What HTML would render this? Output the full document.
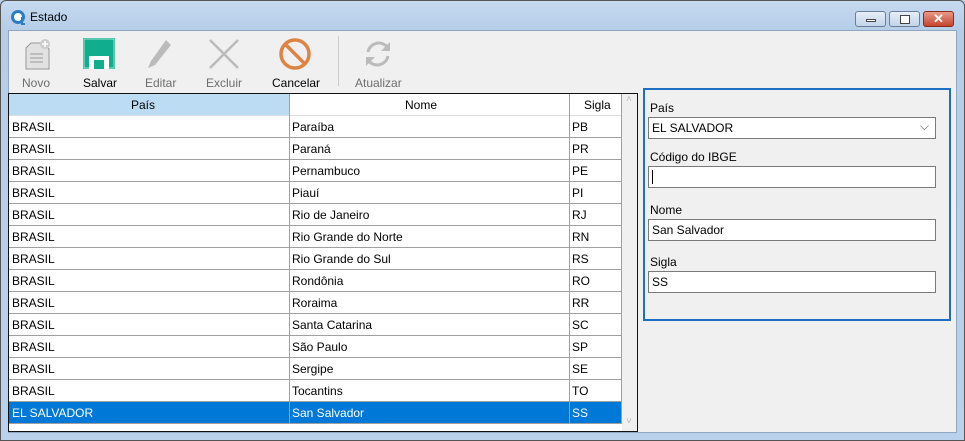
<!DOCTYPE html>
<html><head><meta charset="utf-8"><style>
*{box-sizing:border-box;margin:0;padding:0}
body{width:965px;height:441px;overflow:hidden;font-family:"Segoe UI","Liberation Sans",sans-serif;font-size:12px;background:#b9d1ea;position:relative}
.win{position:absolute;left:0;top:0;width:965px;height:441px;border:1px solid #555;border-radius:6px 6px 0 0;background:linear-gradient(#c6daf0,#b5cde8 30px,#b9d1ea)}
.client{position:absolute;left:8px;top:30px;width:949px;height:403px;background:#f0f0f0;border:1px solid #8ea6c2}
.abs{position:absolute}
.tb{position:absolute;top:76px;font-size:12px;text-align:center}
.grid{position:absolute;left:8px;top:93px;width:630px;height:339px;border:1px solid #111;background:#fff;overflow:hidden}
.row{position:absolute;left:0;height:22px;width:612px;border-bottom:1px solid #a0a0a0}
.row span{position:absolute;top:4px;white-space:nowrap}
.c1{left:3px}.c2{left:283px}.c3{left:563px}
.vl{position:absolute;top:0;width:1px;height:100%;background:#a0a0a0}
.sel{background:#0078d7;color:#fff}
.panel{position:absolute;left:643px;top:88px;width:308px;height:233px;border:2px solid #1e6fc2}
.lbl{position:absolute;left:5px;font-size:12px}
.inp{position:absolute;left:3px;width:288px;height:22px;border:1px solid #7a7a7a;background:#fff;padding:3px 3px;font-size:12px}
.btn{position:absolute;top:11px;height:16px;border:1px solid #6b7e99;border-radius:3px;background:linear-gradient(#e6eef8,#c3d4ea)}
</style></head><body>
<div class="win"></div>
<svg class="abs" style="left:10px;top:9px" width="16" height="16"><circle cx="8" cy="8" r="7" fill="#2a7cc8"/><circle cx="8" cy="8" r="4" fill="#fff"/><path d="M12 8v7h3" stroke="#2a7cc8" stroke-width="2" fill="none"/></svg>
<div class="abs" style="left:30px;top:10px;font-size:12px">Estado</div>
<div class="btn" style="left:855px;width:31px"><div class="abs" style="left:10px;top:7px;width:10px;height:3px;background:#fff;border:1px solid #444"></div></div>
<div class="btn" style="left:889px;width:31px"><div class="abs" style="left:10px;top:3px;width:10px;height:9px;border:1px solid #444;background:#fff"></div></div>
<div class="btn" style="left:923px;width:31px;background:linear-gradient(#e89a8a,#c4442e);border-color:#8a2a1c"><div class="abs" style="left:9px;top:-1px;color:#fff;font-weight:bold;font-size:13px">✕</div></div>
<div class="client"></div>
<!-- toolbar -->
<svg class="abs" style="left:24px;top:38px" width="28" height="32"><path d="M7 5h12l6 6v20H2V10z" fill="#e2e2e2" stroke="#999"/><path d="M6 16h13M6 20h13M6 24h13" stroke="#999"/><circle cx="21" cy="6" r="5" fill="#ccc"/><path d="M21 3v6M18 6h6" stroke="#fff" stroke-width="1.6"/></svg>
<div class="tb" style="left:22px;color:#6d6d6d">Novo</div>
<svg class="abs" style="left:83px;top:38px" width="32" height="31"><rect x="0" y="0" width="32" height="31" fill="#10ae8d"/><rect x="1" y="1" width="30" height="29" fill="none" stroke="#9fe0d0"/><rect x="6" y="18" width="20" height="13" fill="#fff"/><rect x="11" y="22" width="10" height="9" fill="#10ae8d"/></svg>
<div class="tb" style="left:83px">Salvar</div>
<svg class="abs" style="left:146px;top:38px" width="28" height="32"><path d="M20 2l5 5L9 27l-7 3 3-7z" fill="#bbb"/></svg>
<div class="tb" style="left:145px;color:#6d6d6d">Editar</div>
<svg class="abs" style="left:208px;top:38px" width="32" height="32"><path d="M2 2l28 28M30 2L2 30" stroke="#bbb" stroke-width="2.5"/></svg>
<div class="tb" style="left:206px;color:#6d6d6d">Excluir</div>
<svg class="abs" style="left:278px;top:37px" width="34" height="34"><circle cx="17" cy="17" r="14" fill="none" stroke="#dd8445" stroke-width="3.5"/><path d="M7 7l20 20" stroke="#dd8445" stroke-width="3.5"/></svg>
<div class="tb" style="left:272px">Cancelar</div>
<div class="abs" style="left:338px;top:36px;width:1px;height:50px;background:#ccc"></div>
<svg class="abs" style="left:362px;top:38px" width="32" height="32"><path d="M6 14A11 11 0 0 1 26 10" fill="none" stroke="#bbb" stroke-width="3"/><path d="M26 18A11 11 0 0 1 6 22" fill="none" stroke="#bbb" stroke-width="3"/><path d="M28 4v9h-9z" fill="#bbb"/><path d="M4 28v-9h9z" fill="#bbb"/></svg>
<div class="tb" style="left:355px;color:#6d6d6d">Atualizar</div>
<!-- grid -->
<div class="grid">
<div class="abs" style="left:0;top:0;width:281px;height:22px;background:#bcdcf4"></div>
<div class="row" style="top:0;border-color:#ddd"><span style="left:122px">País</span><span style="left:396px">Nome</span><span style="left:575px">Sigla</span></div>
<div class="row" style="top:22px"><span class="c1">BRASIL</span><span class="c2">Paraíba</span><span class="c3">PB</span></div>
<div class="row" style="top:44px"><span class="c1">BRASIL</span><span class="c2">Paraná</span><span class="c3">PR</span></div>
<div class="row" style="top:66px"><span class="c1">BRASIL</span><span class="c2">Pernambuco</span><span class="c3">PE</span></div>
<div class="row" style="top:88px"><span class="c1">BRASIL</span><span class="c2">Piauí</span><span class="c3">PI</span></div>
<div class="row" style="top:110px"><span class="c1">BRASIL</span><span class="c2">Rio de Janeiro</span><span class="c3">RJ</span></div>
<div class="row" style="top:132px"><span class="c1">BRASIL</span><span class="c2">Rio Grande do Norte</span><span class="c3">RN</span></div>
<div class="row" style="top:154px"><span class="c1">BRASIL</span><span class="c2">Rio Grande do Sul</span><span class="c3">RS</span></div>
<div class="row" style="top:176px"><span class="c1">BRASIL</span><span class="c2">Rondônia</span><span class="c3">RO</span></div>
<div class="row" style="top:198px"><span class="c1">BRASIL</span><span class="c2">Roraima</span><span class="c3">RR</span></div>
<div class="row" style="top:220px"><span class="c1">BRASIL</span><span class="c2">Santa Catarina</span><span class="c3">SC</span></div>
<div class="row" style="top:242px"><span class="c1">BRASIL</span><span class="c2">São Paulo</span><span class="c3">SP</span></div>
<div class="row" style="top:264px"><span class="c1">BRASIL</span><span class="c2">Sergipe</span><span class="c3">SE</span></div>
<div class="row" style="top:286px"><span class="c1">BRASIL</span><span class="c2">Tocantins</span><span class="c3">TO</span></div>
<div class="row sel" style="top:308px"><span class="c1">EL SALVADOR</span><span class="c2">San Salvador</span><span class="c3">SS</span></div>
<div class="vl" style="left:280px;height:330px"></div>
<div class="vl" style="left:560px;height:330px"></div>
<div class="vl" style="left:612px;height:330px"></div>
<div class="abs" style="left:613px;top:0;width:17px;height:339px;background:#f0f0f0"></div>
<div class="abs" style="left:617px;top:0;color:#bbb;font-size:10px">˄</div>
<div class="abs" style="left:617px;top:322px;color:#bbb;font-size:10px">˅</div>
</div>
<!-- panel -->
<div class="panel">
<div class="lbl" style="top:11px">País</div>
<div class="inp" style="top:27px">EL SALVADOR<span class="abs" style="right:6px;top:1px;color:#555">⌵</span></div>
<div class="lbl" style="top:60px">Código do IBGE</div>
<div class="inp" style="top:76px"><span style="display:inline-block;width:1px;height:14px;background:#000"></span></div>
<div class="lbl" style="top:113px">Nome</div>
<div class="inp" style="top:129px">San Salvador</div>
<div class="lbl" style="top:165px">Sigla</div>
<div class="inp" style="top:181px">SS</div>
</div>
</body></html>
